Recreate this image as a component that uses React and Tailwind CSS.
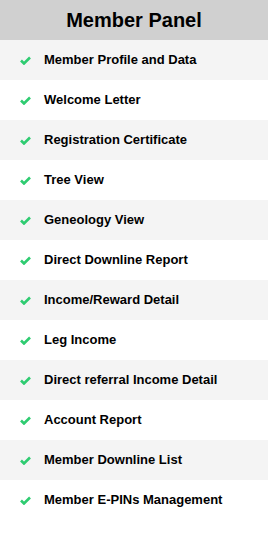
import React from 'react'

const items = [
  'Member Profile and Data',
  'Welcome Letter',
  'Registration Certificate',
  'Tree View',
  'Geneology View',
  'Direct Downline Report',
  'Income/Reward Detail',
  'Leg Income',
  'Direct referral Income Detail',
  'Account Report',
  'Member Downline List',
  'Member E-PINs Management',
]

function Check() {
  return (
    <svg width="11" height="9" viewBox="0 0 11 9" className="shrink-0">
      <path d="M1 4.5 L4 7.5 L10 1.5" fill="none" stroke="#2ecc71" strokeWidth="2.6" />
    </svg>
  )
}

export default function App() {
  return (
    <div className="w-[268px] min-h-[533px] bg-white font-['Liberation_Sans',Arial,sans-serif]">
      <div className="h-10 bg-[#d0d0d0] flex items-center justify-center">
        <h1 className="text-[20px] font-bold text-black">Member Panel</h1>
      </div>
      <ul>
        {items.map((item, i) => (
          <li
            key={item}
            className={`h-10 flex items-center gap-[13px] pl-[20px] ${i % 2 === 0 ? 'bg-[#f4f4f4]' : 'bg-white'}`}
          >
            <Check />
            <span className="text-[13px] font-bold text-black">{item}</span>
          </li>
        ))}
      </ul>
    </div>
  )
}
